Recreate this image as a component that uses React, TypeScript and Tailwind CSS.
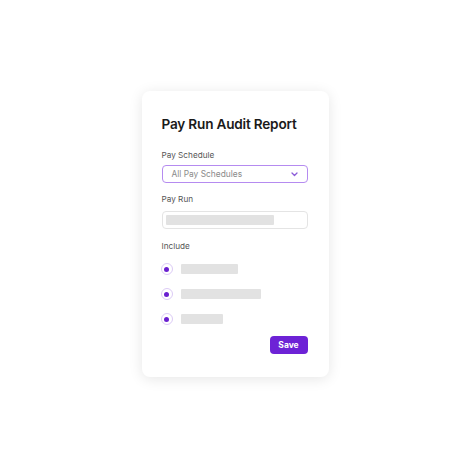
import React from "react";

function Radio() {
  return (
    <span className="flex h-[12px] w-[12px] items-center justify-center rounded-full border border-[#dccbf6] bg-white">
      <span className="h-[5px] w-[5px] rounded-full bg-[#6a1fd0]" />
    </span>
  );
}

export default function App() {
  const options = [57, 80, 42];

  return (
    <div
      className="flex min-h-screen items-center justify-center bg-white"
      style={{ fontFamily: "Inter, 'Noto Sans', sans-serif" }}
    >
      <div className="ml-[2px] w-[187px] rounded-[8px] bg-white pt-[23px] pr-[21px] pb-[23px] pl-[20px] shadow-[0_2px_14px_rgba(0,0,0,0.10)]">
        <h1 className="text-[13.6px] leading-[20px] font-semibold tracking-[-0.2px] text-[#1a1a1a]">
          Pay Run Audit Report
        </h1>

        <div className="mt-[15px] text-[8.2px] leading-[12px] text-[#555]">
          Pay Schedule
        </div>
        <div className="mt-[4px] flex h-[18px] items-center justify-between rounded-[4px] border border-[#b58bf0] pr-[9px] pl-[9px]">
          <span className="text-[8.4px] text-[#8a8a8a]">All Pay Schedules</span>
          <svg width="7" height="5" viewBox="0 0 7 5" fill="none">
            <path
              d="M1 1l2.5 2.5L6 1"
              stroke="#8b5bd8"
              strokeWidth="1.3"
              strokeLinecap="round"
              strokeLinejoin="round"
            />
          </svg>
        </div>

        <div className="mt-[10px] text-[8.2px] leading-[12px] text-[#555]">
          Pay Run
        </div>
        <div className="mt-[6px] flex h-[18px] items-center rounded-[4px] border border-[#e4e4e4] px-[3px]">
          <div className="h-[10px] w-[108px] rounded-[1px] bg-[#e2e2e2]" />
        </div>

        <div className="mt-[11px] text-[8.2px] leading-[12px] text-[#555]">
          Include
        </div>
        <div className="mt-[11px] flex flex-col gap-[13px]">
          {options.map((w, i) => (
            <div key={i} className="-ml-[1px] flex items-center gap-[8px]">
              <Radio />
              <div
                className="h-[10px] rounded-[1px] bg-[#e2e2e2]"
                style={{ width: w }}
              />
            </div>
          ))}
        </div>

        <div className="mt-[11px] flex justify-end">
          <button className="flex h-[18px] w-[38px] items-center justify-center rounded-[4px] bg-[#6d22d6] text-[8.5px] font-bold text-white">
            Save
          </button>
        </div>
      </div>
    </div>
  );
}
